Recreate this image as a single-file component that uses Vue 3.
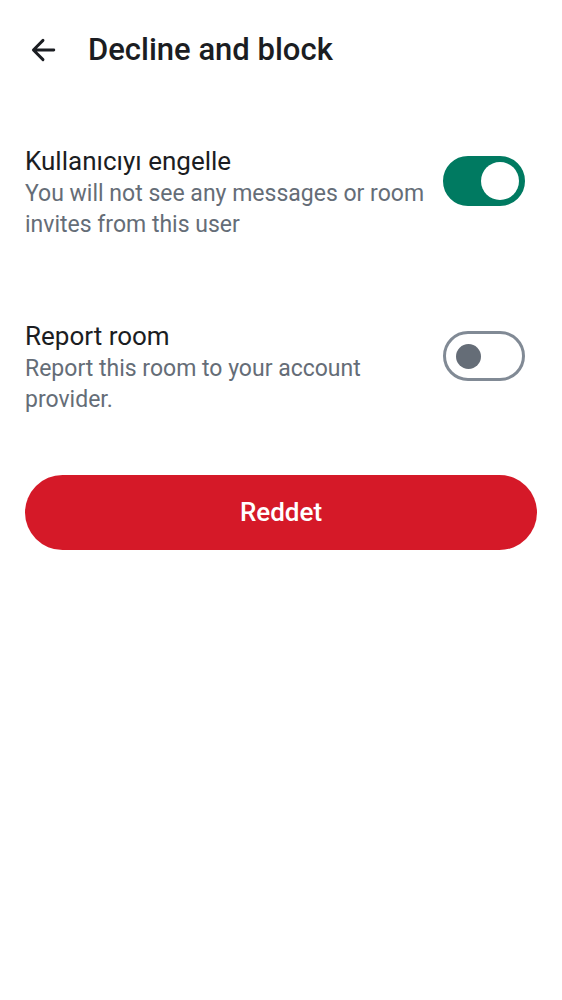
<script setup>
import { ref } from 'vue'
const block = ref(true)
const report = ref(false)
</script>

<template>
  <main class="screen">
    <header class="bar">
      <button class="back" type="button" aria-label="Back">
        <svg viewBox="0 0 38 38" width="38" height="38" aria-hidden="true">
          <path d="M18 9.4 8.4 19l9.6 9.6M8.8 19h20" fill="none" stroke="currentColor" stroke-width="2.9" stroke-linecap="round" stroke-linejoin="round" />
        </svg>
      </button>
      <h1>Decline and block</h1>
    </header>
    <label class="row">
      <span class="text">
        <span class="title">Kullanıcıyı engelle</span>
        <span class="desc">You will not see any messages or room invites from this user</span>
      </span>
      <input v-model="block" class="switch" type="checkbox" role="switch" />
    </label>
    <label class="row">
      <span class="text">
        <span class="title">Report room</span>
        <span class="desc">Report this room to your account provider.</span>
      </span>
      <input v-model="report" class="switch" type="checkbox" role="switch" />
    </label>
    <button class="decline" type="button">Reddet</button>
  </main>
</template>

<style>
body {
  margin: 0;
  background: #fff;
}
</style>

<style scoped>
.screen {
  font-family: Roboto, sans-serif;
  color: #1b1d22;
  padding: 0 25px;
}
.bar {
  display: flex;
  align-items: center;
  gap: 25px;
  height: 100px;
}
.back {
  display: flex;
  padding: 0;
  border: 0;
  background: none;
  color: inherit;
}
h1 {
  margin: 0;
  font-size: 31px;
  line-height: 40px;
  font-weight: 500;
}
.row {
  display: flex;
  align-items: flex-start;
  justify-content: space-between;
  gap: 12px;
  margin-top: 44px;
  margin-bottom: 79px;
}
.row + .row {
  margin-bottom: 60px;
}
.text {
  flex: 1;
}
.title,
.desc {
  display: block;
}
.title {
  font-size: 26px;
  line-height: 34px;
}
.desc {
  font-size: 23px;
  line-height: 31px;
  color: #656d77;
}
.switch {
  appearance: none;
  box-sizing: border-box;
  flex: none;
  display: flex;
  align-items: center;
  width: 82px;
  height: 50px;
  margin: 12px 12px 0 0;
  padding: 0 10px;
  border: 3px solid #818a95;
  border-radius: 25px;
  background: #fff;
}
.switch::before {
  content: "";
  width: 25px;
  height: 25px;
  border-radius: 50%;
  background: #656d77;
}
.switch:checked {
  justify-content: flex-end;
  padding: 0 3px;
  border-color: #007a61;
  background: #007a61;
}
.switch:checked::before {
  width: 38px;
  height: 38px;
  background: #fff;
}
.decline {
  display: block;
  width: 100%;
  padding: 19px;
  border: 0;
  border-radius: 38px;
  background: #d51928;
  color: #fff;
  font-family: inherit;
  font-size: 26px;
  line-height: 37px;
  font-weight: 500;
}
</style>
